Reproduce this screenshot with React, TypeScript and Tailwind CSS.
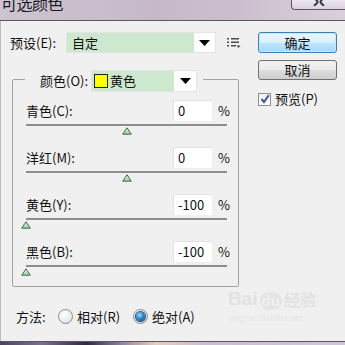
import React from 'react'

type SliderRow = { label: string; value: number }

const sliders: SliderRow[] = [
  { label: '青色(C):', value: 0 },
  { label: '洋红(M):', value: 0 },
  { label: '黄色(Y):', value: -100 },
  { label: '黑色(B):', value: -100 },
]

function Arrow() {
  return (
    <svg width="11" height="6" viewBox="0 0 11 6">
      <path d="M0 0 L11 0 L5.5 6 Z" fill="#000" />
    </svg>
  )
}

function Thumb({ value }: { value: number }) {
  // track is 201px wide, thumb is 10px wide
  const left = ((value + 100) / 200) * 201 - 5
  return (
    <svg width="10" height="8" viewBox="0 0 10 8" style={{ marginLeft: left }}>
      <defs>
        <linearGradient id="thumbFill" x1="0" y1="0" x2="0" y2="1">
          <stop offset="0" stopColor="#f4fbf4" />
          <stop offset="1" stopColor="#9cc79c" />
        </linearGradient>
      </defs>
      <path d="M5 0.8 L9.3 7.2 L0.7 7.2 Z" fill="url(#thumbFill)" stroke="#3f6f45" strokeWidth="1" strokeLinejoin="round" />
    </svg>
  )
}

function Slider({ row }: { row: SliderRow }) {
  return (
    <div className="flex flex-col">
      <div className="flex h-[21px] items-center">
        <span className="flex-1 text-[13px] leading-[16px]">{row.label}</span>
        <div className="flex h-[21px] w-[39px] items-center border-t border-l border-[#e2e2e2] bg-white pl-[4px] text-[13px] leading-[16px]">
          {row.value}
        </div>
        <span className="ml-[6px] w-[10px] text-[13px] leading-[16px]">%</span>
      </div>
      <div className="mt-[3px] h-[2px] w-[201px] bg-[#8d8d8d]" />
      <div className="mt-[1px] flex h-[8px]">
        <Thumb value={row.value} />
      </div>
    </div>
  )
}

function Radio({ checked }: { checked?: boolean }) {
  return (
    <div className="flex h-[15px] w-[15px] items-center justify-center rounded-full border border-[#8c8e90] bg-[radial-gradient(circle_at_40%_35%,#ffffff_0%,#ececec_55%,#cfcfcf_100%)]">
      {checked && (
        <div className="h-[9px] w-[9px] rounded-full bg-[radial-gradient(circle_at_40%_35%,#a9dcfb_0%,#2f86c9_45%,#0f4a86_100%)] shadow-[0_0_0_1px_#1d4f80]" />
      )}
    </div>
  )
}

export default function App() {
  return (
    <div className="relative flex h-[345px] w-[345px] flex-col overflow-hidden bg-[#f0f0f0] font-['Noto_Sans_CJK_SC','Liberation_Sans',sans-serif] text-[#111]">
      {/* title bar */}
      <div className="flex h-[20px] items-start justify-between bg-[linear-gradient(90deg,#cfc4d2_0%,#c6b8c9_45%,#cdbfcf_70%,#d9cedb_100%)]">
        <span className="-mt-[6px] pl-[1px] text-[16px] leading-[18px] tracking-[-0.5px] text-[#1a1a1a]">可选颜色</span>
        <div className="flex h-[10px] w-[54px] items-start justify-center rounded-bl-[4px] border-b border-l border-[#5d5866] bg-[linear-gradient(180deg,#ece6ee_0%,#dcd2de_100%)]">
          <svg width="12" height="6" viewBox="0 0 12 6" className="mt-0">
            <path d="M0 -4 L5 2 M12 -4 L7 2 M5 2 L1 6 M7 2 L11 6" stroke="#3b3644" strokeWidth="2" />
          </svg>
        </div>
      </div>
      <div className="h-px bg-[#5a5866]" />

      {/* body */}
      <div className="relative flex h-[320px] shadow-[inset_1px_0_0_#bdbdbd]">
        <div className="flex w-[248px] flex-col pt-[11px]">
          <div className="flex h-[21px] items-center pl-[10px]">
            <span className="w-[56px] text-[13px] leading-[16px]">预设(E):</span>
            <div className="flex h-[21px] w-[150px] items-center border border-[#e4e4e4] bg-white">
              <div className="flex h-full w-[127px] items-center bg-[#cce8cf] pl-[5px] text-[13px] leading-[16px]">自定</div>
              <div className="flex flex-1 items-center justify-center">
                <Arrow />
              </div>
            </div>
            <svg width="14" height="10" viewBox="0 0 14 10" className="ml-[11px]">
              <g fill="#4a4a4a">
                <rect x="0" y="0" width="2" height="1.5" />
                <rect x="4" y="0" width="8" height="1.5" />
                <rect x="0" y="3.5" width="2" height="1.5" />
                <rect x="4" y="3.5" width="8" height="1.5" />
                <rect x="0" y="7" width="2" height="1.5" />
                <rect x="4" y="7" width="5" height="1.5" />
                <path d="M9.5 7.5 L13.5 7.5 L11.5 10 Z" />
              </g>
            </svg>
          </div>

          <fieldset className="mt-[17px] ml-[12px] w-[227px] rounded-[2px] border border-[#a3a3a3] px-[13px] pt-[12px] pr-[10px] pb-[10px]">
            <legend className="ml-[-1px] pl-[15px] pr-[6px]">
              <div className="flex h-[18px] items-start">
                <span className="mt-[3px] w-[51px] text-[13px] leading-[16px]">颜色(O):</span>
                <div className="flex h-[22px] w-[106px] items-center border border-[#e4e4e4] bg-white">
                  <div className="flex h-full w-[82px] items-center bg-[#cce8cf] pl-[2px]">
                    <div className="h-[14px] w-[14px] border border-[#222] bg-[#ffff00]" />
                    <span className="ml-[2px] text-[13px] leading-[16px]">黄色</span>
                  </div>
                  <div className="flex flex-1 items-center justify-center">
                    <Arrow />
                  </div>
                </div>
              </div>
            </legend>
            <div className="flex flex-col gap-[12px]">
              {sliders.map((s) => (
                <Slider key={s.label} row={s} />
              ))}
            </div>
          </fieldset>

          <div className="mt-[22px] flex h-[15px] items-center pl-[16px] text-[13px] leading-[16px]">
            <span className="w-[42px]">方法:</span>
            <Radio />
            <span className="ml-[4px]">相对(R)</span>
            <div className="ml-[13px]">
              <Radio checked />
            </div>
            <span className="ml-[4px]">绝对(A)</span>
          </div>
        </div>

        <div className="ml-[10px] flex w-[79px] flex-col pt-[11px]">
          <button className="flex h-[21px] items-center justify-center rounded-[3px] border border-[#3c7fb1] bg-[linear-gradient(180deg,#eaf6fd_0%,#d9f0fc_50%,#bee6fd_51%,#a7d9f5_100%)] text-[13px] leading-[16px] shadow-[inset_0_0_0_1px_#c6e9fb]">
            确定
          </button>
          <button className="mt-[7px] flex h-[20px] items-center justify-center rounded-[3px] border border-[#707070] bg-[linear-gradient(180deg,#f2f2f2_0%,#ebebeb_50%,#dddddd_51%,#cfcfcf_100%)] text-[13px] leading-[16px]">
            取消
          </button>
          <div className="mt-[12px] flex h-[14px] items-center">
            <div className="flex h-[13px] w-[13px] items-center justify-center border border-[#8e8f8f] bg-[linear-gradient(180deg,#f0f0f0_0%,#ffffff_100%)]">
              <svg width="10" height="10" viewBox="0 0 10 10">
                <path d="M1.5 5 L4 8 L8.8 1.2" fill="none" stroke="#3d5a9a" strokeWidth="2" />
              </svg>
            </div>
            <span className="ml-[4px] text-[13px] leading-[16px]">预览(P)</span>
          </div>
        </div>

        {/* watermark */}
        <div className="absolute left-[228px] top-[267px] flex flex-col items-start text-[#e2e2e2]">
          <div className="flex items-end font-['Liberation_Sans',sans-serif] text-[19px] font-bold leading-[22px]">
            <span>Bai</span>
            <span className="ml-[2px] rounded-full bg-[#e4e4e4] px-[2px] text-[15px] leading-[18px] text-[#f0f0f0]">du</span>
            <span className="ml-[2px] font-['Noto_Sans_CJK_SC',sans-serif] text-[16px]">经验</span>
          </div>
          <span className="mt-[2px] font-['Liberation_Serif',serif] text-[10px] leading-[12px] text-[#e6e6e6]">jingyan.baidu.com</span>
        </div>
      </div>

      <div className="h-px bg-[#5b5866]" />
      <div className="h-[3px] bg-[linear-gradient(90deg,#4a4460_0%,#7d6f92_12%,#2e2840_25%,#8f809c_35%,#e6cdb8_45%,#cbbccf_60%,#d2c6d6_100%)]" />
    </div>
  )
}
